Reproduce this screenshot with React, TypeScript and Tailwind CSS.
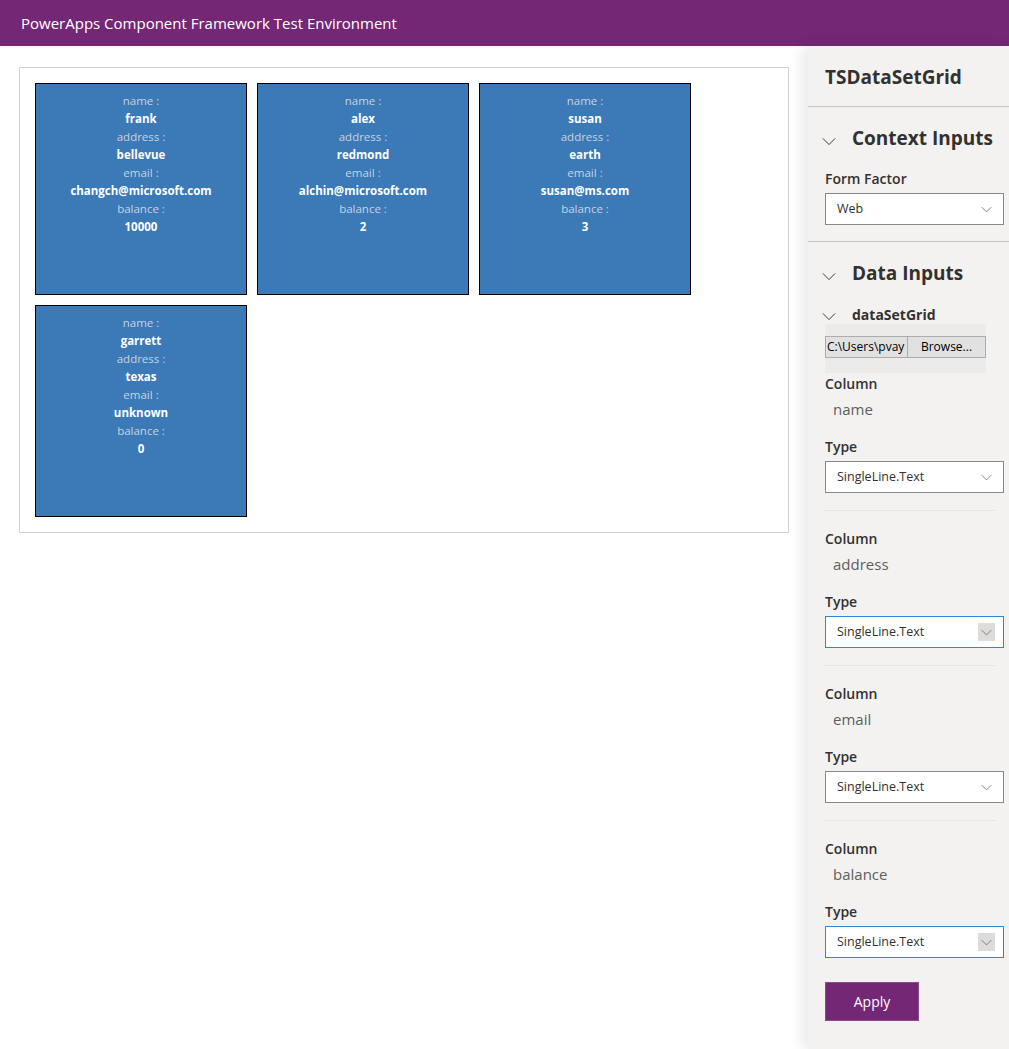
import React from 'react'

const records = [
  { name: 'frank', address: 'bellevue', email: 'changch@microsoft.com', balance: '10000' },
  { name: 'alex', address: 'redmond', email: 'alchin@microsoft.com', balance: '2' },
  { name: 'susan', address: 'earth', email: 'susan@ms.com', balance: '3' },
  { name: 'garrett', address: 'texas', email: 'unknown', balance: '0' },
]

const columns: { name: string; focused: boolean }[] = [
  { name: 'name', focused: false },
  { name: 'address', focused: true },
  { name: 'email', focused: false },
  { name: 'balance', focused: true },
]

function Chevron({ className = '' }: { className?: string }) {
  return (
    <svg viewBox="0 0 16 10" className={className} fill="none" stroke="currentColor" strokeWidth="1.1">
      <path d="M1 1.5 L8 8.5 L15 1.5" />
    </svg>
  )
}

function Card({ r }: { r: (typeof records)[number] }) {
  const rows: [string, string][] = [
    ['name :', r.name],
    ['address :', r.address],
    ['email :', r.email],
    ['balance :', r.balance],
  ]
  return (
    <div className="w-[212px] h-[212px] bg-[#3b79b7] border border-black pt-[8px] text-center text-[11.5px] leading-[18px]">
      {rows.map(([label, value]) => (
        <React.Fragment key={label}>
          <div className="text-[#c9d3df]">{label}</div>
          <div className="text-white font-bold">{value}</div>
        </React.Fragment>
      ))}
    </div>
  )
}

function Select({ value, focused }: { value: string; focused?: boolean }) {
  return (
    <div
      className={`w-[179px] h-[32px] bg-white border flex items-center justify-between pl-[11px] pr-[3px] text-[12.5px] text-[#323130] ${
        focused ? 'border-[#2b88d8]' : 'border-[#8a8886]'
      }`}
    >
      <span>{value}</span>
      <span
        className={`w-[17px] h-[18px] mr-[5px] flex items-center justify-center ${focused ? 'bg-[#dedcda]' : ''}`}
      >
        <Chevron className="w-[11px] h-[7px] text-[#605e5c]" />
      </span>
    </div>
  )
}

function Section({ title }: { title: string }) {
  return (
    <div className="flex items-center h-[28px]">
      <Chevron className="w-[14px] h-[9px] ml-[14px] mr-[16px] mt-[6px] text-[#323130]" />
      <span className="text-[19px] font-bold text-[#323130]">{title}</span>
    </div>
  )
}

export default function App() {
  return (
    <div className="w-[1009px] h-[1049px] overflow-hidden flex flex-col bg-white font-['Open_Sans','Noto_Sans',sans-serif]">
      <header className="h-[46px] shrink-0 bg-[#742774] flex items-center px-[21px] text-white text-[15px]">
        PowerApps Component Framework Test Environment
      </header>

      <div className="flex flex-1 min-h-0">
        <main className="flex-1 pt-[21px] pl-[19px] pr-[19px]">
          <div className="border border-[#d0d0d0] p-[15px] flex flex-wrap gap-[10px]">
            {records.map((r) => (
              <Card key={r.name} r={r} />
            ))}
          </div>
        </main>

        <aside className="w-[201px] shrink-0 bg-[#f3f2f1] shadow-[-6px_0_14px_rgba(0,0,0,0.09)] overflow-hidden">
          <div className="h-[61px] flex items-center pl-[17px] pt-[3px] border-b border-[#c8c6c4] text-[19px] font-bold text-[#323130]">
            TSDataSetGrid
          </div>

          <div className="pt-[17px] pb-[16px] border-b border-[#c8c6c4]">
            <Section title="Context Inputs" />
            <div className="pl-[17px] mt-[16px]">
              <div className="text-[14px] font-semibold text-[#323130] h-[22px] leading-[22px]">Form Factor</div>
              <div className="mt-[3px]">
                <Select value="Web" />
              </div>
            </div>
          </div>

          <div className="pt-[17px]">
            <Section title="Data Inputs" />
            <div className="flex items-center h-[18px] mt-[18px]">
              <Chevron className="w-[14px] h-[9px] ml-[14px] mr-[16px] mt-[4px] text-[#323130]" />
              <span className="text-[14px] font-bold text-[#323130]">dataSetGrid</span>
            </div>

            <div className="pl-[17px]">
              <div className="w-[161px] h-[49px] bg-[#edebe9] pt-[12px] mt-[1px]">
                <div className="flex h-[22px] text-[12px]">
                  <div className="w-[82px] border border-[#adadad] border-r-0 bg-[#e1e1e1] text-black overflow-hidden whitespace-nowrap leading-[20px] pl-[1px]">
                    C:\Users\pvay
                  </div>
                  <div className="w-[79px] border border-[#adadad] bg-[#e1e1e1] text-black text-center leading-[20px] whitespace-nowrap">
                    Browse...
                  </div>
                </div>
              </div>

              {columns.map((c, i) => (
                <div key={c.name} className={i > 0 ? 'border-t border-dotted border-[#dddbd9] mr-[14px] pt-[17px]' : ''}>
                  <div className="text-[14px] font-semibold text-[#323130] h-[22px] leading-[22px]">Column</div>
                  <div className="text-[15px] text-[#605e5c] pl-[8px] h-[28px] leading-[28px]">{c.name}</div>
                  <div className="text-[14px] font-semibold text-[#323130] h-[22px] leading-[22px] mt-[13px]">Type</div>
                  <div className="mt-[3px] pb-[17px]">
                    <Select value="SingleLine.Text" focused={c.focused} />
                  </div>
                </div>
              ))}

              <button className="mt-[7px] w-[94px] h-[39px] bg-[#742774] text-white text-[14px] border border-[#8a4a8a]">
                Apply
              </button>
            </div>
          </div>
        </aside>
      </div>
    </div>
  )
}
